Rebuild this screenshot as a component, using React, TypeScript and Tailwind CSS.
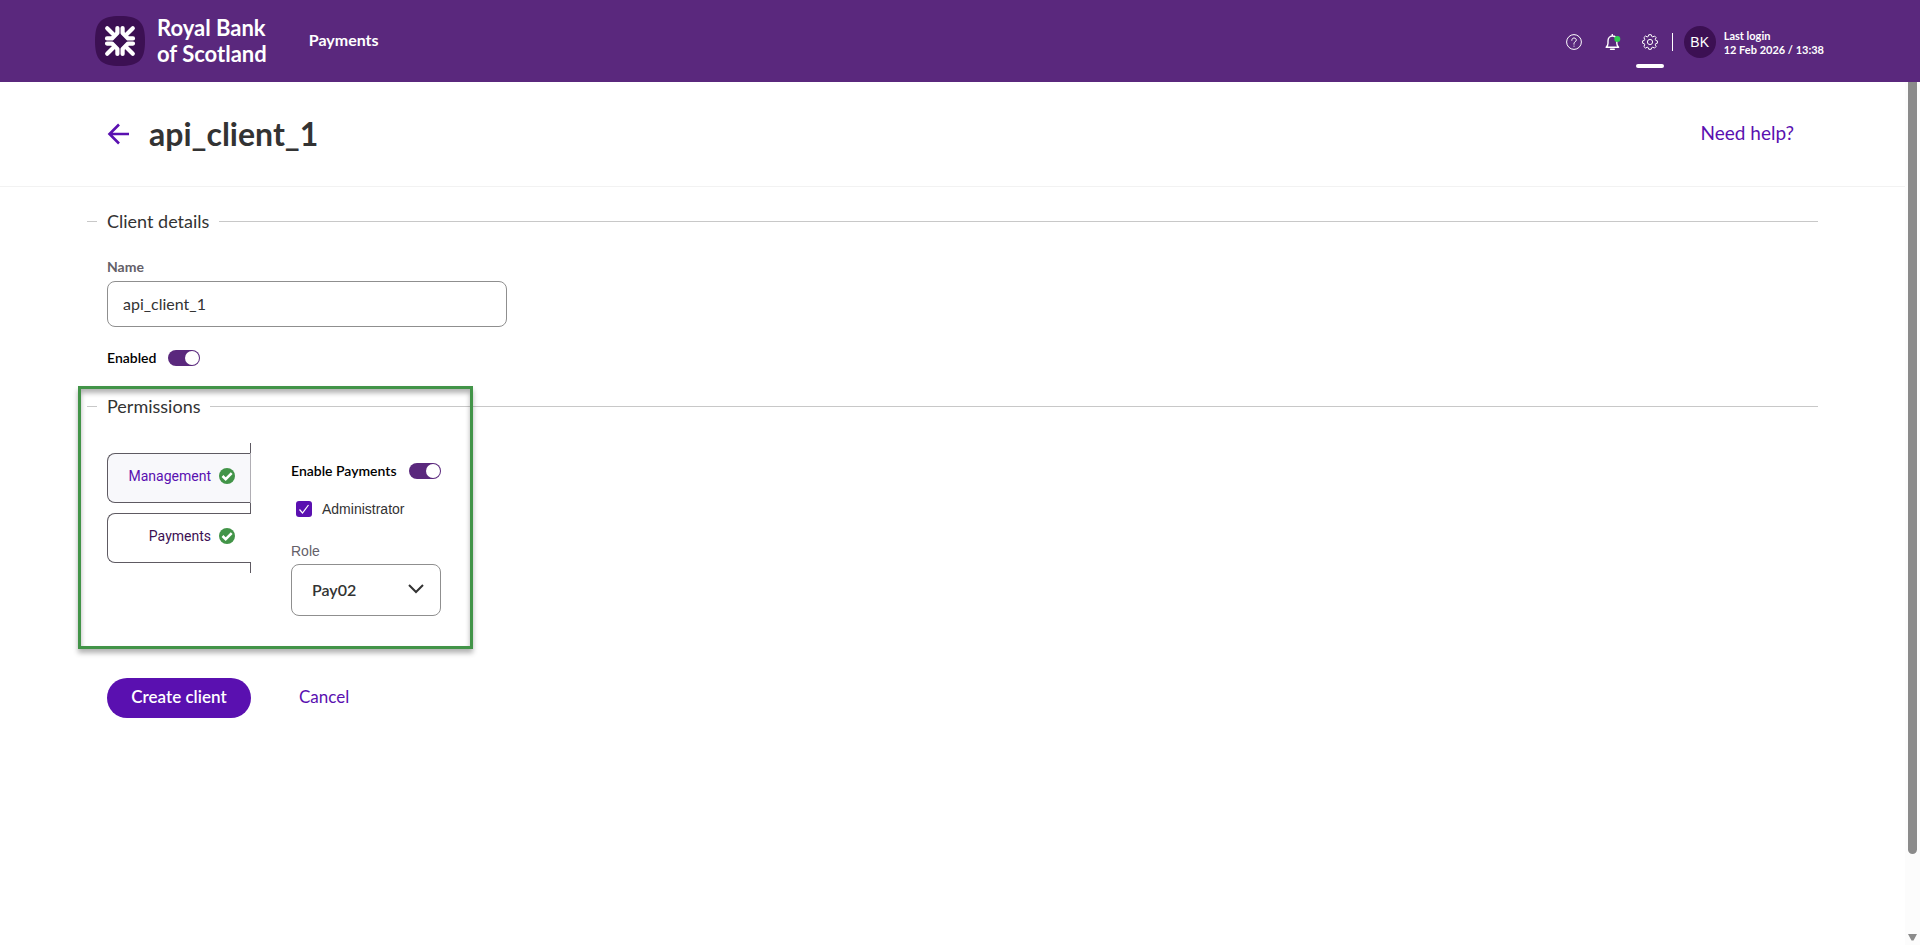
import React from 'react';

const Logo = () => (
  <svg viewBox="0 0 50 50" className="h-[50px] w-[50px] shrink-0" aria-hidden="true">
    <path d="M25 0C6 0 0 6 0 25s6 25 25 25 25-6 25-25S44 0 25 0Z" fill="#3c1053" />
    {[0, 90, 180, 270].map((angle) => (
      <g
        key={angle}
        transform={`rotate(${angle} 25 25)`}
        fill="none"
        stroke="#fff"
        strokeWidth="4.2"
        strokeLinecap="round"
        strokeLinejoin="round"
      >
        <path d="M22.4 12V17L17 22.4H12" />
        <path d="M12.2 12.2L18 18" />
      </g>
    ))}
    <path d="M25 18.6L31.4 25L25 31.4L18.6 25Z" fill="#3c1053" />
  </svg>
);

const HelpIcon = () => (
  <svg viewBox="0 0 16 16" className="h-4 w-4" fill="none" stroke="#fff" aria-hidden="true">
    <circle cx="8" cy="8" r="7.4" />
    <path d="M5.8 6.3C5.8 4.9 6.7 4 8 4s2.3.8 2.3 2.1C10.3 7.7 8 7.9 8 9.4v.8" strokeLinecap="round" />
    <circle cx="8" cy="12.1" r=".6" fill="#fff" stroke="none" />
  </svg>
);

const BellIcon = () => (
  <svg viewBox="0 0 16 16" className="h-4 w-4" fill="none" stroke="#fff" aria-hidden="true">
    <path d="M7.3.4v1.4M1.2 13.2h12.4c-1.200-1.200-1.800-2-1.800-4V7c0-3-1.800-5-4.400-5S3 4 3 7v2.200c0 2-.6 2.800-1.800 4Z" strokeWidth="1.4" strokeLinejoin="round" strokeLinecap="round" />
    <path d="M5.6 15.2h3.6" strokeWidth="1.6" strokeLinecap="round" />
    <circle cx="12.3" cy="5" r="3" fill="#2fd04f" stroke="none" />
  </svg>
);

const GearIcon = () => (
  <svg viewBox="0 0 16 16" className="h-4 w-4" fill="none" stroke="#fff" aria-hidden="true">
    <circle cx="8" cy="8" r="2.6" />
    <path
      strokeLinejoin="round"
      d="M6.8.7h2.4l.5 1.7 1.1.5 1.7-.9 1.6 1.6-.8 1.7.4 1.1 1.7.5v2.3l-1.7.5-.4 1.1.8 1.7-1.6 1.6-1.7-.9-1.1.5-.5 1.6H6.8l-.5-1.6-1.1-.5-1.7.9-1.6-1.6.8-1.7-.4-1.1-1.7-.5V6.900l1.700-.5.4-1.100-.8-1.700L3.500 2l1.700.9 1.100-.5Z"
    />
  </svg>
);

const TickBadge = () => (
  <svg viewBox="0 0 16 16" className="h-4 w-4 shrink-0" aria-hidden="true">
    <circle cx="8" cy="8" r="8" fill="#429448" />
    <path d="M3.500 8l3.200 3.200 6-6" fill="none" stroke="#fff" strokeWidth="2.600" />
  </svg>
);

const SectionTitle = ({ children }: { children: React.ReactNode }) => (
  <div className="flex h-6 items-center gap-[10px]">
    <span className="h-px w-[10px] bg-[#c8c8c8]" />
    <h2 className="text-lg leading-6 text-[#333]">{children}</h2>
    <span className="h-px flex-1 bg-[#c8c8c8]" />
  </div>
);

const Toggle = ({ id, label }: { id: string; label: string }) => (
  <div className="flex h-4 items-center gap-3">
    <label htmlFor={id} className="text-sm leading-4 font-semibold text-black">{label}</label>
    <input
      id={id}
      type="checkbox"
      role="switch"
      defaultChecked
      className="flex h-4 w-8 appearance-none items-center justify-end rounded-full bg-[#5a287d] px-px before:h-[14px] before:w-[14px] before:rounded-full before:bg-white"
    />
  </div>
);

const App: React.FC = () => {
  return (
    <div className="flex min-h-screen flex-col bg-white font-['Lato',sans-serif]">
      <header className="flex h-[82px] items-center justify-between bg-[#5a287d] pr-24 pl-[95px] text-white">
        <div className="flex items-center">
          <Logo />
          <div className="ml-3 text-[22px] leading-[26px] font-bold">
            Royal Bank
            <br />
            of Scotland
          </div>
          <a href="#" className="ml-[42px] pb-[2px] text-base font-bold">Payments</a>
        </div>
        <div className="flex h-full items-center pt-[2px]">
          <button aria-label="Help"><HelpIcon /></button>
          <button aria-label="Notifications" className="ml-[23px]"><BellIcon /></button>
          <button aria-label="Settings" className="relative ml-[21px]">
            <GearIcon />
            <span className="absolute top-[30px] -left-[6px] h-1 w-7 rounded-full bg-white" />
          </button>
          <span className="ml-[14px] h-[18px] w-px bg-white" />
          <div className="ml-[11px] flex h-8 w-8 items-center justify-center rounded-full bg-[#3c1053] font-['Liberation_Sans',sans-serif] text-sm">
            BK
          </div>
          <div className="ml-2 pt-[2px] text-[11px] leading-[14px] font-bold">
            Last login
            <br />
            12 Feb 2026 / 13:38
          </div>
        </div>
      </header>

      <div className="flex flex-1">
        <main className="flex-1">
          <div className="flex h-[105px] items-center justify-between border-b border-[#f2f2f2] pr-[111px] pl-[107px]">
            <div className="flex items-center">
              <button aria-label="Back">
                <svg viewBox="0 0 22 22" className="h-[22px] w-[22px]" fill="none" stroke="#5a10b0" strokeWidth="2.600" aria-hidden="true">
                  <path d="M22 11H2.500M12 1.500L2.500 11l9.500 9.500" />
                </svg>
              </button>
              <h1 className="ml-5 text-[32px] leading-10 font-bold text-[#333]">api_client_1</h1>
            </div>
            <a href="#" className="pb-[2px] text-[19px] text-[#5a10b0]">Need help?</a>
          </div>

          <form className="px-[87px] pt-[22px]">
            <SectionTitle>Client details</SectionTitle>
            <div className="px-5 pt-[26px] pb-7">
              <label htmlFor="name" className="block text-sm leading-4 font-bold text-[#646068]">Name</label>
              <input
                id="name"
                type="text"
                defaultValue="api_client_1"
                className="mt-[6px] mb-[23px] block h-[46px] w-[400px] rounded-lg border border-[#8f8f8f] px-[15px] pb-[2px] text-base text-[#333]"
              />
              <Toggle id="enabled" label="Enabled" />
            </div>

            <section className="relative">
              <SectionTitle>Permissions</SectionTitle>
              <div className="flex px-5 pt-[25px]">
                <div className="flex w-36 flex-col font-['Roboto',sans-serif] text-sm">
                  <span className="h-[10px] border-r border-[#5e5a62]" />
                  <button type="button" className="flex h-[50px] items-center justify-end gap-2 rounded-l-lg border border-[#5e5a62] border-r-[#b0aeb4] bg-[#f8f8fb] pr-[15px] pb-1 text-[#5a10b0]">
                    Management
                    <TickBadge />
                  </button>
                  <span className="h-[10px] border-r border-[#5e5a62]" />
                  <button type="button" className="flex h-[50px] items-center justify-end gap-2 rounded-l-lg border border-r-0 border-[#5e5a62] bg-white pr-4 pb-1 text-[#3c1053]">
                    Payments
                    <TickBadge />
                  </button>
                  <span className="h-[10px] border-r border-[#5e5a62]" />
                </div>

                <div className="ml-10 pt-5">
                  <Toggle id="enable-payments" label="Enable Payments" />
                  <div className="relative mt-[22px] flex h-4 items-center pl-[5px] font-['Liberation_Sans',sans-serif]">
                    <input id="administrator" type="checkbox" defaultChecked className="h-4 w-4 appearance-none rounded-[3px] bg-[#5a10b0]" />
                    <svg viewBox="0 0 16 16" className="pointer-events-none absolute top-0 left-[5px] h-4 w-4" fill="none" stroke="#fff" strokeWidth="1.200" aria-hidden="true">
                      <path d="M3.500 8.500l3 3.500 6-8" />
                    </svg>
                    <label htmlFor="administrator" className="ml-[10px] text-sm leading-4 text-[#333]">Administrator</label>
                  </div>
                  <label htmlFor="role" className="mt-[26px] block font-['Liberation_Sans',sans-serif] text-sm leading-4 text-[#646068]">Role</label>
                  <div className="relative mt-[5px] w-[150px]">
                    <select id="role" className="h-[52px] w-full appearance-none rounded-lg border border-[#8f8f8f] bg-white px-5 text-base font-semibold text-[#333]">
                      <option>Pay02</option>
                    </select>
                    <svg viewBox="0 0 16 10" className="pointer-events-none absolute top-5 right-[17px] h-[10px] w-4" fill="none" stroke="#333" strokeWidth="2" aria-hidden="true">
                      <path d="M1 1l7 7 7-7" />
                    </svg>
                  </div>
                </div>
              </div>
              <div className="pointer-events-none absolute -top-2 -left-[9px] h-[263px] w-[395px] border-[3px] border-[#429448] shadow-[0_4px_5px_rgba(0,0,0,0.3),inset_0_4px_5px_rgba(0,0,0,0.3)]" />
            </section>

            <div className="flex items-center px-5 pt-[62px]">
              <button type="submit" className="h-10 w-36 rounded-full bg-[#5a10b0] pb-[2px] text-[17px] font-semibold text-white">Create client</button>
              <button type="button" className="ml-12 pb-[2px] text-[17px] text-[#5a10b0]">Cancel</button>
            </div>
          </form>
        </main>

        <div className="flex w-[15px] flex-col items-center bg-[#fcfcfc]" aria-hidden="true">
          <span className="w-[9px] flex-1 rounded-b-full bg-[#8b8b8b]" />
          <svg viewBox="0 0 9 7" className="mt-20 mb-1 h-[7px] w-[9px]">
            <path d="M0 0h9L5.500 6.500h-2Z" fill="#8b8b8b" />
          </svg>
        </div>
      </div>
    </div>
  );
};

export default App;
